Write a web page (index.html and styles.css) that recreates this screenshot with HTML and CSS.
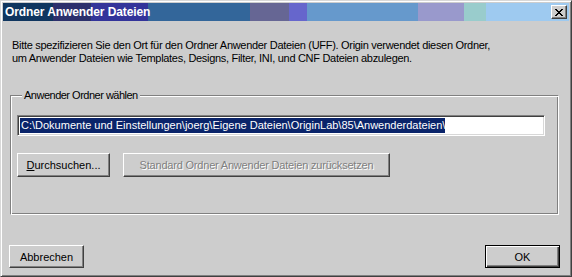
FILE: index.html
```html
<!DOCTYPE html>
<html>
	<head>
		<meta charset="UTF-8">
		<title>Ordner Anwender Dateien</title>
		<link rel="stylesheet" href="styles.css">
	</head>
	<body>
		<div class="window">
			<div class="titlebar">
				<span class="title">Ordner Anwender Dateien</span>
				<a href="#" class="closeBtn">
					<svg width="8" height="7" viewBox="0 0 8 7">
						<path d="M0 0h2v1H0zM6 0h2v1H6zM1 1h2v1H1zM5 1h2v1H5zM2 2h4v1H2zM3 3h2v1H3zM2 4h4v1H2zM1 5h2v1H1zM5 5h2v1H5zM0 6h2v1H0zM6 6h2v1H6z" fill="#000"/>
					</svg>
				</a>
			</div>
			<div class="content">
				<p class="info">Bitte spezifizieren Sie den Ort für den Ordner Anwender Dateien (UFF). Origin verwendet diesen Ordner,<br>um Anwender Dateien wie Templates, Designs, Filter, INI, und CNF Dateien abzulegen.</p>
				<fieldset class="group">
					<legend>Anwender Ordner wählen</legend>
					<div class="edit"><span class="sel">C:\Dokumente und Einstellungen\joerg\Eigene Dateien\OriginLab\85\Anwenderdateien\</span></div>
					<div class="row">
						<a href="#" class="btn browse"><u>D</u>urchsuchen...</a>
						<a href="#" class="btn disabled reset">Standard Ordner Anwender Dateien zurücksetzen</a>
					</div>
				</fieldset>
				<div class="footer">
					<a href="#" class="btn">Abbrechen</a>
					<a href="#" class="btn default">OK</a>
				</div>
			</div>
		</div>
	</body>
</html>
```

FILE: styles.css
```css
*{
	padding: 0;
	margin: 0;
	box-sizing: border-box;
}
body{
	font-family: "Liberation Sans", Arial, sans-serif;
	font-size: 11px;
	color: #000;
	background: #cdcdcd;
}
.window{
	width: 572px;
	height: 277px;
	padding: 2px;
	background: #cdcdcd;
	border: 1px solid;
	border-color: #d8d8d8 #404040 #404040 #d8d8d8;
	box-shadow: inset 1px 1px #fff, inset -1px -1px #808080;
	display: flex;
	flex-direction: column;
}
.titlebar{
	height: 18px;
	display: flex;
	align-items: center;
	justify-content: space-between;
	padding: 0 2px 0 2px;
	background: linear-gradient(to right,
		#10365f 0, #10365f 50px,
		#2c306c 50px, #2c306c 88px,
		#33349a 88px, #33349a 145px,
		#33669a 145px, #33669a 247px,
		#666694 247px, #666694 286px,
		#6666cc 286px, #6666cc 304px,
		#6699cc 304px, #6699cc 415px,
		#9999cc 415px, #9999cc 461px,
		#99cccc 461px, #99cccc 483px,
		#9ecaf0 483px);
}
.title{
	color: #fff;
	font-weight: bold;
	font-size: 12px;
	line-height: 18px;
	letter-spacing: -0.1px;
}
.closeBtn{
	width: 16px;
	height: 14px;
	display: flex;
	align-items: center;
	justify-content: center;
	background: #cdcdcd;
	border: 1px solid;
	border-color: #fff #404040 #404040 #fff;
	box-shadow: inset -1px -1px #808080;
}
.content{
	flex: 1;
	display: flex;
	flex-direction: column;
	padding: 0 6px 6px 6px;
}
.info{
	margin: 18px 0 0 3px;
	line-height: 13px;
	letter-spacing: -0.3px;
}
.group{
	margin: 24px 0 0 1px;
	width: 549px;
	padding: 0 6px 37px 6px;
	border: 1px solid;
	border-color: #808080 #fff #fff #808080;
	box-shadow: inset 1px 1px #fff, inset -1px -1px #808080;
}
.group legend{
	margin-left: 5px;
	padding: 0 2px;
	line-height: 13px;
	letter-spacing: -0.5px;
	background: #cdcdcd;
}
.edit{
	margin-top: 13px;
	width: 528px;
	height: 21px;
	background: #fff;
	border: 1px solid;
	border-color: #808080 #fff #fff #808080;
	box-shadow: inset 1px 1px #404040, inset -1px -1px #d8d8d8;
	padding: 2px 0 0 2px;
}
.sel{
	display: inline-block;
	background: #0a246a;
	color: #fff;
	line-height: 15px;
	padding-left: 1px;
}
.row{
	display: flex;
	gap: 13px;
	margin-top: 17px;
}
.btn{
	display: flex;
	align-items: center;
	justify-content: center;
	width: 75px;
	height: 23px;
	color: #000;
	text-decoration: none;
	background: #cdcdcd;
	border: 1px solid;
	border-color: #fff #404040 #404040 #fff;
	box-shadow: inset -1px -1px #808080;
}
.browse{
	width: 93px;
	height: 24px;
}
.reset{
	width: 267px;
	height: 24px;
	letter-spacing: -0.2px;
}
.disabled{
	color: #808080;
	text-shadow: 1px 1px #fff;
}
.footer{
	margin-top: auto;
	display: flex;
	justify-content: space-between;
	padding: 0 3px 0 0;
}
.default{
	border-color: #000;
	box-shadow: inset 1px 1px #fff, inset -1px -1px #404040, inset -2px -2px #808080;
}
```
